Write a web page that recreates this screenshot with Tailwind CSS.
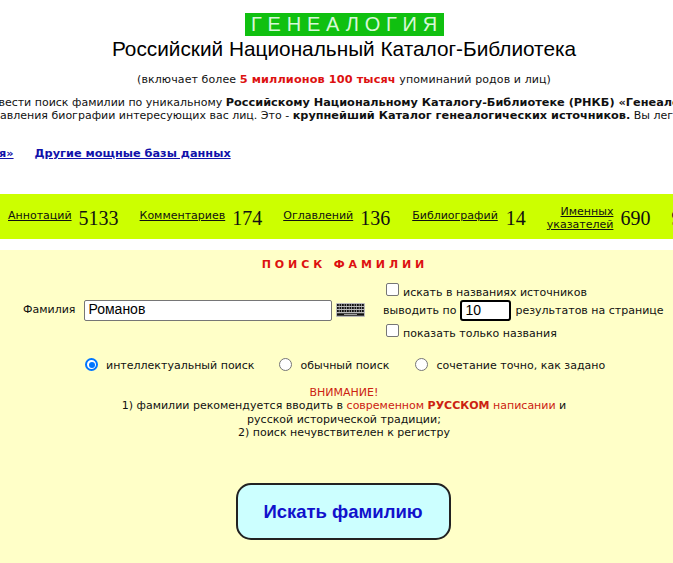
<!DOCTYPE html>
<html lang="ru"><head><meta charset="utf-8"><script src="https://cdn.jsdelivr.net/npm/@tailwindcss/browser@4"></script></head>
<body class="bg-white overflow-hidden h-[563px] w-[673px]">
<div class="w-[900px] -ml-[106px] font-['DejaVu_Sans',sans-serif] text-[11px] text-[#111]">
  <div class="h-[194px] text-center">
    <div class="pt-[13px] h-[36px]"><span class="inline-block bg-[#10c010] h-[23px] leading-[23px] w-[199px] pl-[6px] text-[#d8f8d8] text-[20px] tracking-[5.8px] whitespace-nowrap font-['Liberation_Sans',sans-serif]">ГЕНЕАЛОГИЯ</span></div>
    <div class="font-['Liberation_Sans',sans-serif] text-[20.8px] leading-[26px] text-black">Российский Национальный Каталог-Библиотека</div>
    <div class="mt-[10px] leading-[16px] tracking-[0.1px]">(включает более <b class="text-[#dd1111] text-[11.3px]">5 миллионов 100 тысяч</b> упоминаний родов и лиц)</div>
    <div class="mt-[8px] text-left whitespace-nowrap leading-[13px] -ml-[21px]">Здесь вы можете провести поиск фамилии по уникальному <b class="text-[11.3px]">Российскому Национальному Каталогу-Библиотеке (РНКБ) «Генеалогия»</b></div>
    <div class="text-left whitespace-nowrap leading-[13px] ml-[56px]">для составления биографии интересующих вас лиц. Это - <b class="text-[11.3px]">крупнейший Каталог генеалогических источников.</b> Вы легко</div>
    <div class="mt-[25px] flex gap-[21px] font-bold text-[11.3px] text-[#1111aa] underline leading-[14px] text-left"><span class="ml-[-27px]">Каталог «Генеалогия»</span><span>Другие мощные базы данных</span></div>
  </div>
  <div class="h-[45px] bg-[#ccff00] flex items-center gap-[21px] pl-[114px] whitespace-nowrap">
    <div class="flex items-center gap-[7px]"><span class="underline">Аннотаций</span><span class="font-['Liberation_Serif',serif] text-[20px] mt-[2px]">5133</span></div>
    <div class="flex items-center gap-[7px]"><span class="underline">Комментариев</span><span class="font-['Liberation_Serif',serif] text-[20px] mt-[2px]">174</span></div>
    <div class="flex items-center gap-[7px]"><span class="underline">Оглавлений</span><span class="font-['Liberation_Serif',serif] text-[20px] mt-[2px]">136</span></div>
    <div class="flex items-center gap-[8px] ml-[1px]"><span class="underline">Библиографий</span><span class="font-['Liberation_Serif',serif] text-[20px] mt-[2px]">14</span></div>
    <div class="flex items-center gap-[7px]"><span class="underline text-right leading-[13px] mt-[2px]">Именных<br>указателей</span><span class="font-['Liberation_Serif',serif] text-[20px] mt-[2px]">690</span></div>
    <span class="font-['Liberation_Serif',serif] text-[20px] mt-[2px]">9</span>
  </div>
  <div class="mt-[11px] h-[313px] bg-[#ffffc8] relative">
    <div class="text-center pt-[8px] leading-[13px] font-bold text-[#dd1111] tracking-[3.9px] pl-[2px]">ПОИСК ФАМИЛИИ</div>
    <div class="flex mt-[11px] pl-[129px]">
      <div class="flex items-center h-[56px] w-[361px]">
        <span>Фамилия</span>
        <span class="ml-[9px] w-[248px] h-[21px] bg-white border border-[#767676] rounded-[2px] px-[3px] text-[14px] leading-[17px] text-black font-['Liberation_Sans',sans-serif]">Романов</span>
        <svg class="ml-[4px]" width="29" height="14" viewBox="0 0 29 14"><rect width="29" height="14" rx="1" fill="#bbb"/><path d="M1 2H28M1 5H28M1 8H28" stroke="#111" stroke-width="2.2" stroke-dasharray="1.8 .7"/><path d="M1 11.5H28" stroke="#111" stroke-width="2.4"/><path d="M8 11.5H21" stroke="#ddd" stroke-width=".7"/></svg>
      </div>
      <div class="leading-[13px] whitespace-nowrap -ml-[1px]">
        <div class="flex items-end h-[17px] ml-[3px]"><span class="w-[13px] h-[13px] mb-[3px] bg-white border border-[#767676] rounded-[2px] mr-[4px]"></span><span>искать в названиях источников</span></div>
        <div class="flex items-center h-[24px] -mt-[1px]"><span>выводить по</span><span class="ml-[4px] w-[51px] h-[21px] bg-white border-2 border-black rounded-[3px] px-[3px] text-[14px] leading-[17px] text-black font-['Liberation_Sans',sans-serif]">10</span><span class="ml-[4px]">результатов на странице</span></div>
        <div class="flex items-end h-[17px] mt-[1px] ml-[3px]"><span class="w-[13px] h-[13px] mb-[3px] bg-white border border-[#767676] rounded-[2px] mr-[4px]"></span><span>показать только названия</span></div>
      </div>
    </div>
    <div class="flex mt-[16px] pl-[191px] h-[20px] items-center whitespace-nowrap">
      <span class="w-[13px] h-[13px] -mt-[3px] rounded-full border-2 border-[#0075ff] bg-white p-[1.5px]"><span class="block w-full h-full rounded-full bg-[#0075ff]"></span></span>
      <span class="ml-[8px]">интеллектуальный поиск</span>
      <span class="ml-[25px] w-[13px] h-[13px] -mt-[3px] rounded-full border border-[#767676] bg-white"></span>
      <span class="ml-[8px]">обычный поиск</span>
      <span class="ml-[26px] w-[13px] h-[13px] -mt-[3px] rounded-full border border-[#767676] bg-white"></span>
      <span class="ml-[8px]">сочетание точно, как задано</span>
    </div>
    <div class="text-center mt-[10px] leading-[13.3px]">
      <div class="text-[#cc2211]">ВНИМАНИЕ!</div>
      <div>1) фамилии рекомендуется вводить в <span class="text-[#cc2211]">современном <b>РУССКОМ</b> написании</span> и</div>
      <div>русской исторической традиции;</div>
      <div>2) поиск нечувствителен к регистру</div>
    </div>
    <div class="flex justify-center mt-[44px] pr-[2px]">
      <div class="w-[215px] h-[57px] rounded-[15px] border-2 border-[#222] bg-[#ccffff] flex items-center justify-center font-['Liberation_Sans',sans-serif] font-bold text-[18.5px] text-[#1111cc]">Искать фамилию</div>
    </div>
  </div>
</div>
</body></html>
